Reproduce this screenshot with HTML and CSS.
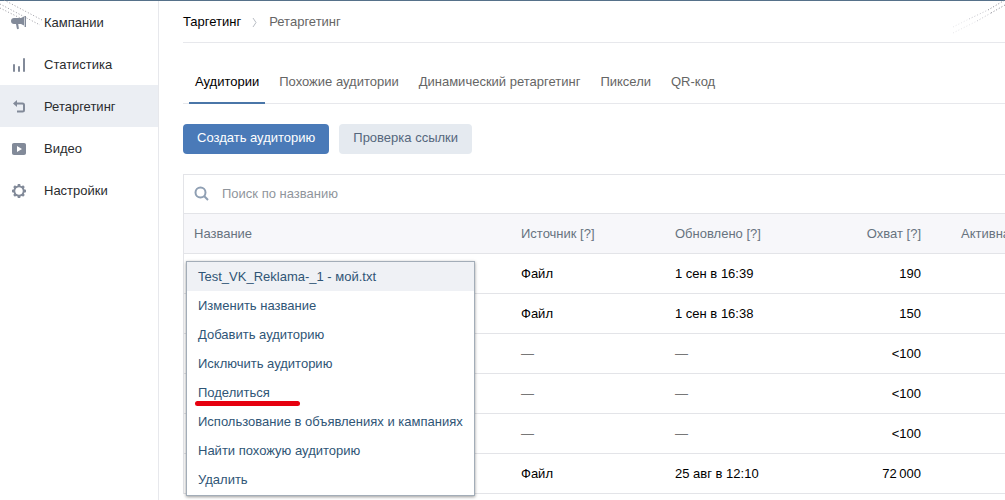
FILE: index.html
```html
<!DOCTYPE html>
<html lang="ru">

<head>
    <meta charset="UTF-8">
    <meta name="viewport" content="width=device-width, initial-scale=1">
    <title>Ретаргетинг</title>
    <link rel="stylesheet" href="styles.css">
</head>

<body>
    <!-- Dotted corner lines -->
    <svg class="corner corner-left" width="44" height="26" viewBox="0 0 44 26">
        <path d="M4 0L42 20M0 4L40 25M0 8L20 18" />
    </svg>
    <svg class="corner corner-right" width="54" height="34" viewBox="0 0 54 34">
        <path class="far" d="M2 27L18 19M2 33L26 21" />
        <path class="mid" d="M18 19L37 10M26 21L40 13" />
        <path class="near" d="M37 10L54 0M40 13L54 5" />
    </svg>

    <div class="layout">
        <nav class="sidebar">
            <a href="#" class="side-link">
                <svg width="16" height="16" viewBox="0 0 16 16">
                    <path d="M3 3h7v6H7.200l.6 4c.1.800-.3 1.200-.9 1.200s-1-.4-1.100-1L5 9H3C1.300 9 0 7.800 0 6s1.300-3 3-3z" />
                    <path d="M10 3l3-1.500v9L10 9z" />
                    <path d="M13.600 1H15v11h-1.400z" />
                </svg>
                Кампании
            </a>
            <a href="#" class="side-link">
                <svg width="16" height="16" viewBox="0 0 16 16">
                    <rect x="2" y="7" width="2" height="8" rx="1" />
                    <rect x="7" y="9" width="2" height="6" rx="1" />
                    <rect x="12" y="1" width="2" height="14" rx="1" />
                </svg>
                Статистика
            </a>
            <a href="#" class="side-link active">
                <svg width="16" height="16" viewBox="0 0 16 16">
                    <path d="M6 1v7L2 4.500z" />
                    <path class="line" d="M4 4.500h7.500c1 0 1.500.5 1.500 1.500v5c0 1-.5 1.500-1.500 1.500H6" />
                </svg>
                Ретаргетинг
            </a>
            <a href="#" class="side-link">
                <svg width="16" height="16" viewBox="0 0 16 16">
                    <path fill-rule="evenodd" d="M3 2h10c1.300 0 2 .7 2 2v8c0 1.300-.7 2-2 2H3c-1.300 0-2-.7-2-2V4c0-1.300.7-2 2-2zM6 5v6l5-3z" />
                </svg>
                Видео
            </a>
            <a href="#" class="side-link">
                <svg width="16" height="16" viewBox="0 0 16 16">
                    <circle class="line" cx="8" cy="8" r="4.600" />
                    <path d="M6.800 1h2.400l.5 3H6.300zM6.800 15h2.400l.5-3H6.300zM1 6.800v2.400l3 .5V6.300zM15 6.800v2.400l-3 .5V6.300zM2.200 3.900l1.700-1.700 2.400 1.700-2.400 2.400zM13.800 3.900l-1.700-1.700-2.400 1.700 2.400 2.400zM2.200 12.100l1.700 1.700 2.400-1.700-2.400-2.400zM13.800 12.100l-1.700 1.700-2.400-1.700 2.400-2.400z" />
                    <circle class="hole" cx="8" cy="8" r="3.400" />
                </svg>
                Настройки
            </a>
        </nav>

        <main class="content">
            <div class="breadcrumbs">
                <a href="#">Таргетинг</a>
                <svg width="6" height="11" viewBox="0 0 6 11">
                    <path d="M1 2L4 6.500L1 11" />
                </svg>
                <span>Ретаргетинг</span>
            </div>

            <div class="tabs">
                <a href="#" class="tab active">Аудитории</a>
                <a href="#" class="tab">Похожие аудитории</a>
                <a href="#" class="tab">Динамический ретаргетинг</a>
                <a href="#" class="tab">Пиксели</a>
                <a href="#" class="tab">QR-код</a>
            </div>

            <div class="actions">
                <button type="button" class="button">Создать аудиторию</button>
                <button type="button" class="button secondary">Проверка ссылки</button>
            </div>

            <div class="audiences">
                <label class="search">
                    <svg width="16" height="16" viewBox="0 0 16 16">
                        <circle cx="6.500" cy="6.500" r="5" />
                        <path d="M10.300 10.300L14 14" />
                    </svg>
                    <input type="search" placeholder="Поиск по названию" aria-label="Поиск по названию">
                </label>

                <div class="table-area">
                    <table>
                        <colgroup>
                            <col class="col-name">
                            <col class="col-source">
                            <col class="col-updated">
                            <col class="col-reach">
                            <col>
                        </colgroup>
                        <thead>
                            <tr>
                                <th>Название</th>
                                <th>Источник [?]</th>
                                <th>Обновлено [?]</th>
                                <th class="num">Охват [?]</th>
                                <th class="last">Активна</th>
                            </tr>
                        </thead>
                        <tbody>
                            <tr>
                                <td></td>
                                <td>Файл</td>
                                <td>1 сен в 16:39</td>
                                <td class="num">190</td>
                                <td></td>
                            </tr>
                            <tr>
                                <td></td>
                                <td>Файл</td>
                                <td>1 сен в 16:38</td>
                                <td class="num">150</td>
                                <td></td>
                            </tr>
                            <tr>
                                <td></td>
                                <td class="empty">—</td>
                                <td class="empty">—</td>
                                <td class="num">&lt;100</td>
                                <td></td>
                            </tr>
                            <tr>
                                <td></td>
                                <td class="empty">—</td>
                                <td class="empty">—</td>
                                <td class="num">&lt;100</td>
                                <td></td>
                            </tr>
                            <tr>
                                <td></td>
                                <td class="empty">—</td>
                                <td class="empty">—</td>
                                <td class="num">&lt;100</td>
                                <td></td>
                            </tr>
                            <tr>
                                <td></td>
                                <td>Файл</td>
                                <td>25 авг в 12:10</td>
                                <td class="num">72&#8201;000</td>
                                <td></td>
                            </tr>
                        </tbody>
                    </table>

                    <!-- Audience menu, opened over the first row -->
                    <div class="menu">
                        <a href="#" class="menu-title">Test_VK_Reklama-_1 - мой.txt</a>
                        <a href="#">Изменить название</a>
                        <a href="#">Добавить аудиторию</a>
                        <a href="#">Исключить аудиторию</a>
                        <a href="#" class="marked">Поделиться</a>
                        <a href="#">Использование в объявлениях и кампаниях</a>
                        <a href="#">Найти похожую аудиторию</a>
                        <a href="#">Удалить</a>
                    </div>
                </div>
            </div>
        </main>
    </div>
</body>

</html>
```

FILE: styles.css
```css
* {
    box-sizing: border-box;
}

body {
    margin: 0;
    border-top: 1px solid #56718a;
    background: #fff;
    color: #000;
    font-family: "Liberation Sans", Arial, sans-serif;
    font-size: 13px;
    line-height: 16px;
    overflow: hidden;
}

a {
    color: inherit;
    text-decoration: none;
}

.layout {
    display: flex;
    min-height: 100vh;
}

/* Corner lines */

.corner {
    position: absolute;
    top: 0;
    fill: none;
    stroke: #9a9aa2;
    stroke-width: 1;
    stroke-dasharray: 1 2;
    pointer-events: none;
}

.corner-left {
    left: 0;
}

.corner-right {
    right: 0;
}

.far {
    stroke: #e6e6ea;
}

.mid {
    stroke: #c4c4cb;
}

.near {
    stroke: #85858e;
}

/* Sidebar */

.sidebar {
    flex: none;
    width: 159px;
    border-right: 1px solid #e7e8ec;
}

.side-link {
    display: flex;
    align-items: center;
    gap: 17px;
    height: 42px;
    padding-top: 2px;
    padding-left: 11px;
    color: #2a2c2e;
}

.side-link.active {
    background: #ebeef3;
}

.side-link svg {
    fill: #828a99;
}

.side-link .line {
    fill: none;
    stroke: #828a99;
    stroke-width: 2;
}

.side-link .hole {
    fill: #fff;
}

/* Content */

.content {
    flex: 1;
    min-width: 0;
    padding-left: 24px;
}

.breadcrumbs {
    display: flex;
    align-items: center;
    gap: 11px;
    height: 42px;
    border-bottom: 1px solid #e7e8ec;
    color: #656565;
}

.breadcrumbs svg {
    fill: none;
    stroke: #b8bcc4;
}

.breadcrumbs a {
    color: #000;
}

.tabs {
    display: flex;
    gap: 8px;
    margin-top: 18px;
    padding-left: 6px;
    border-bottom: 1px solid #e7e8ec;
}

.tab {
    height: 43px;
    margin-bottom: -1px;
    padding: 13px 6px 0;
    color: #656565;
    white-space: nowrap;
}

.tab.active {
    border-bottom: 2px solid #4a76a8;
    color: #000;
}

.actions {
    display: flex;
    gap: 10px;
    margin: 20px 0;
}

.button {
    height: 30px;
    padding: 0 14px 2px;
    border: none;
    border-radius: 4px;
    background: #4a7ab8;
    color: #fff;
    font: inherit;
    cursor: pointer;
}

.button.secondary {
    background: #e5eaf0;
    color: #55677d;
}

/* Audience table */

.audiences {
    border: 1px solid #e3e4e8;
    border-right: none;
    border-bottom: none;
}

.search {
    display: flex;
    align-items: center;
    gap: 12px;
    height: 38px;
    padding-left: 10px;
}

.search svg {
    fill: none;
    stroke: #8f9fb3;
    stroke-width: 2;
}

.search input {
    flex: 1;
    padding: 0;
    border: none;
    outline: none;
    font: inherit;
}

.search input::placeholder {
    color: #8f959c;
}

.table-area {
    position: relative;
}

table {
    width: 100%;
    table-layout: fixed;
    border-collapse: collapse;
}

.col-name {
    width: 327px;
}

.col-source {
    width: 154px;
}

.col-updated {
    width: 146px;
}

.col-reach {
    width: 120px;
}

th,
td {
    height: 40px;
    padding: 0 10px;
    border-bottom: 1px solid #e3e4e8;
    text-align: left;
    white-space: nowrap;
}

th {
    border-top: 1px solid #e3e4e8;
    background: #f7f7fa;
    color: #67737f;
    font-weight: normal;
}

th.last {
    padding-left: 30px;
    padding-right: 0;
}

.num {
    text-align: right;
}

.empty {
    color: #777;
}

/* Menu */

.menu {
    position: absolute;
    top: 48px;
    left: 2px;
    width: 289px;
    padding-bottom: 1px;
    border: 1px solid #a3adb8;
    background: #fff;
    box-shadow: 0 1px 3px rgba(0, 0, 0, 0.4);
    color: #2f5576;
}

.menu a {
    display: block;
    padding: 7px 11px 6px;
    white-space: nowrap;
}

.menu .menu-title {
    background: #eff1f5;
}

.marked {
    position: relative;
}

.marked::after {
    content: "";
    position: absolute;
    left: 8px;
    bottom: 1px;
    width: 105px;
    height: 5px;
    border-radius: 3px;
    background: #e6000f;
}
```
